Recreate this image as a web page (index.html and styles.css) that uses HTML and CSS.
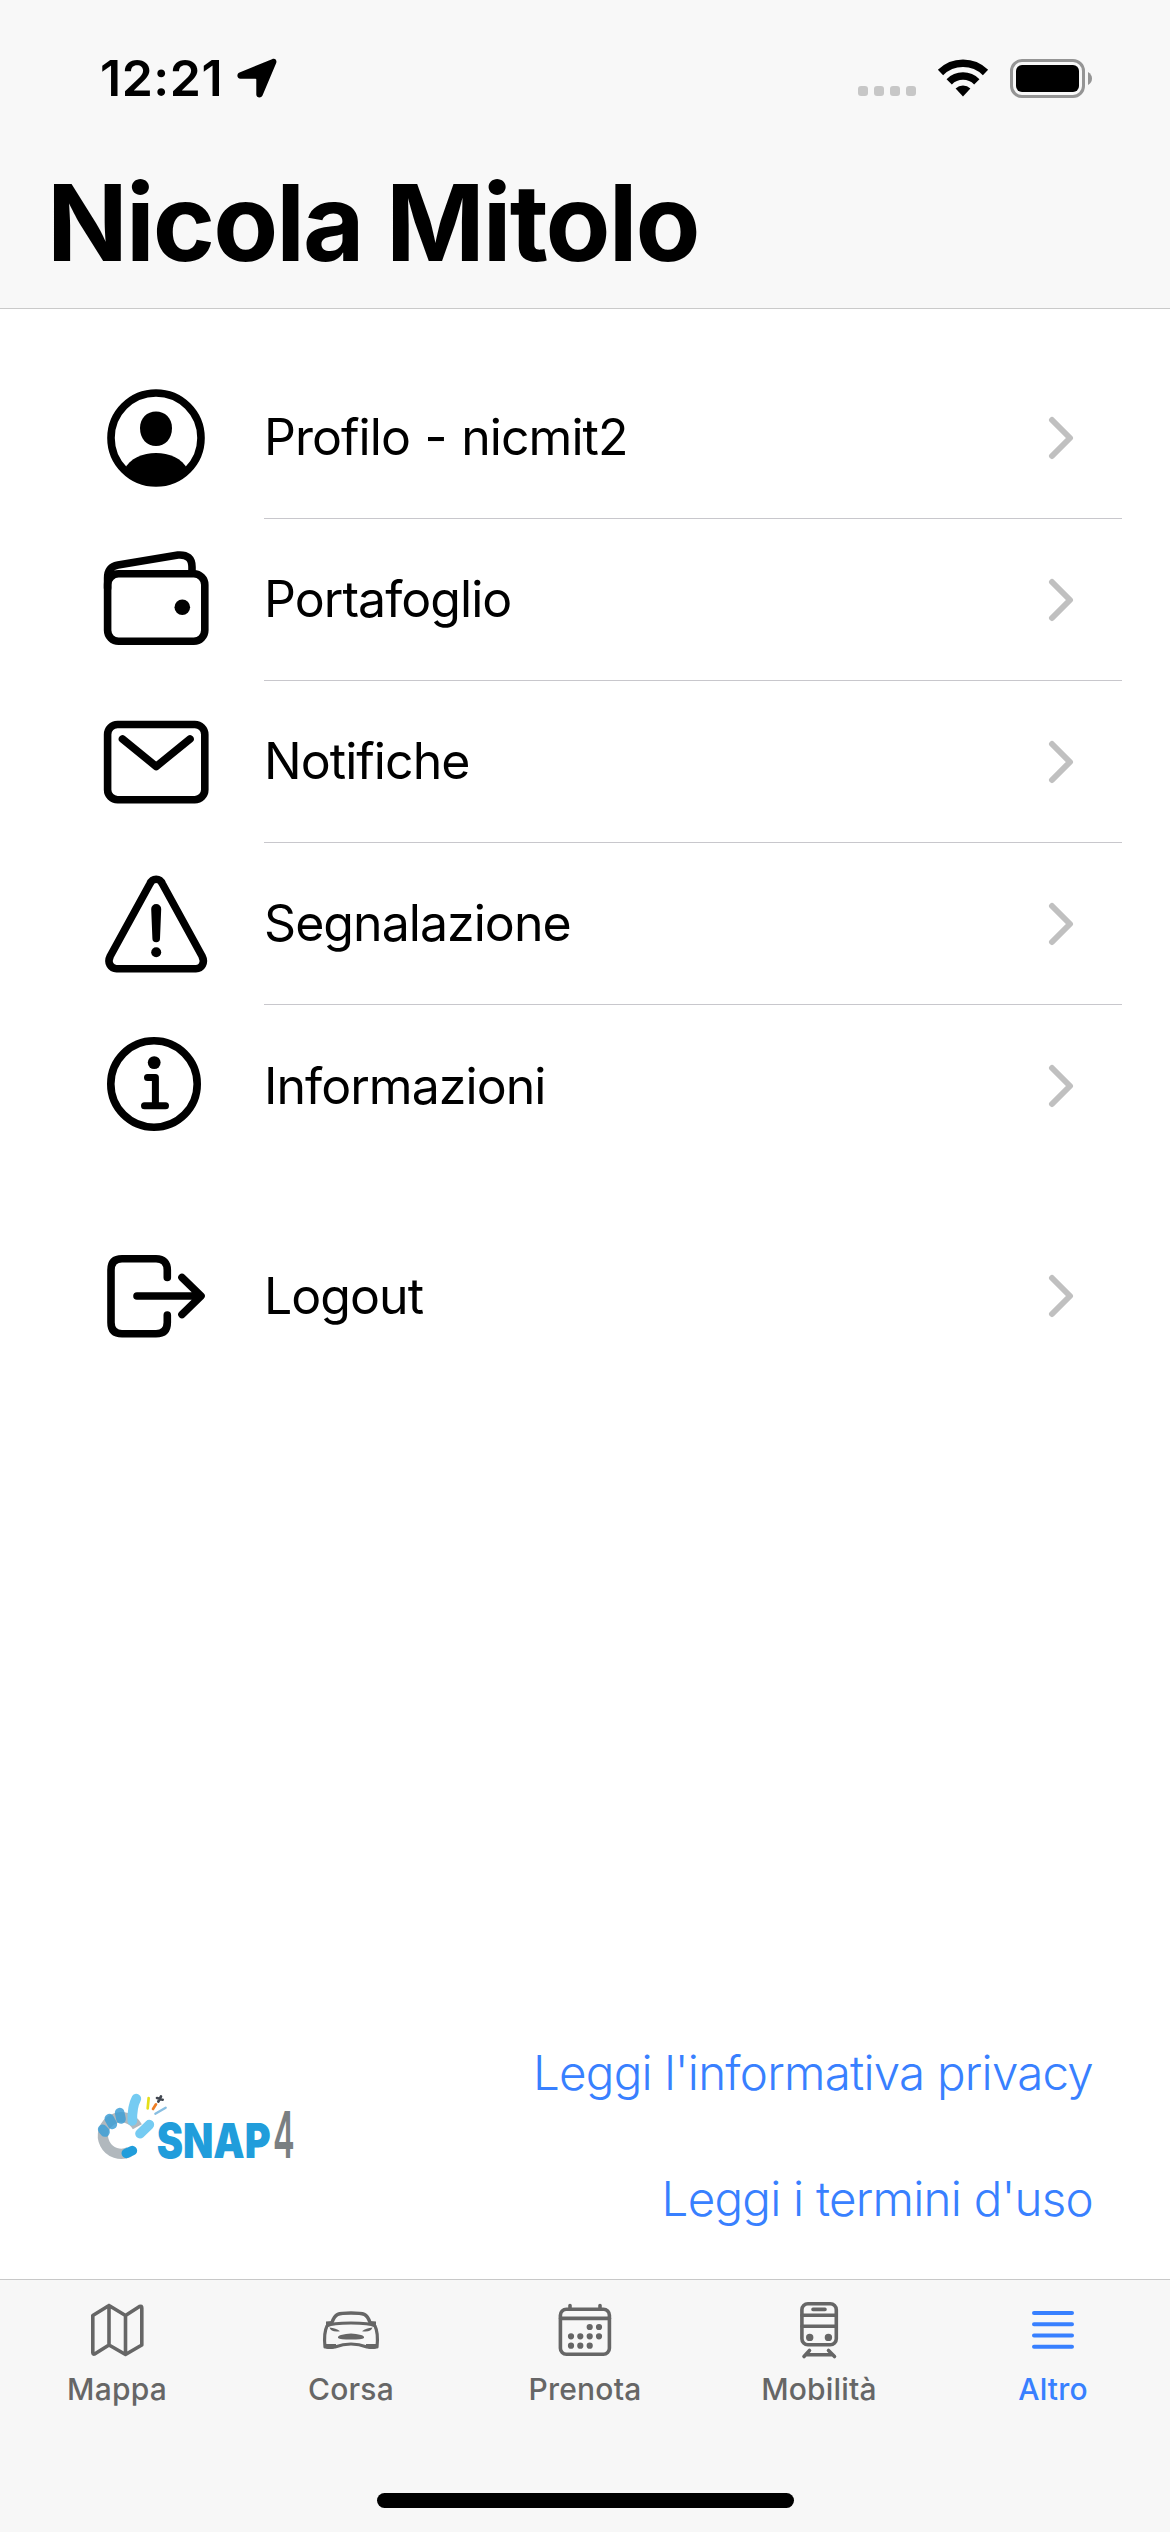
FILE: index.html
```html
<!DOCTYPE html>
<html lang="it">
<head>
  <meta charset="UTF-8">
  <meta name="viewport" content="width=device-width, initial-scale=1.0">
  <title>Altro</title>
  <link rel="stylesheet" href="styles.css">
</head>
<body>
  <div class="app">
    <header class="header">
      <div class="status-bar">
        <span class="time">12:21</span>
        <svg class="location" width="42" height="42" viewBox="0 0 42 42"><path d="M36 2.2C39 .8 41.2 3 40.2 6L26.5 38.5C25.2 41.5 20.3 41 20.3 37.5V22.5Q20.3 21.7 19.5 21.7H4.5C.8 21.7 .3 17 3.5 15.6Z"/></svg>
        <div class="signal"><i></i><i></i><i></i><i></i></div>
        <svg class="wifi" width="52" height="38" viewBox="0 0 52 38">
          <path d="M3.5 13.5A32 32 0 0 1 48.5 13.5" fill="none" stroke="#000" stroke-width="7.5"/>
          <path d="M12.2 22.8A19.5 19.5 0 0 1 39.8 22.8" fill="none" stroke="#000" stroke-width="7.5"/>
          <path d="M18.6 29.5A10.5 10.5 0 0 1 33.4 29.5L26 37.5Z"/>
        </svg>
        <div class="battery"><div class="level"></div></div>
        <svg class="nub" width="4" height="13" viewBox="0 0 4 13"><path d="M0 0Q4 2.5 4 6.5T0 13Z" fill="#959595"/></svg>
      </div>
      <h1 class="title">Nicola Mitolo</h1>
    </header>

    <main class="content">
      <div class="list">
        <div class="item">
          <svg class="icon" viewBox="0 0 112 112">
            <circle cx="56" cy="56" r="45"/>
            <path class="fill" d="M56 29.5C65 29.5 72 36 72 46C72 57 65 64 56 64S40 57 40 46C40 36 47 29.5 56 29.5Z"/>
            <path class="fill" d="M24 88C30 76 43 71 56 71S82 76 88 88A45 45 0 0 1 24 88Z"/>
          </svg>
          <div class="row"><span class="label">Profilo - nicmit2</span><svg class="chevron" viewBox="0 0 26 44"><path d="M4 4L22 22L4 40"/></svg></div>
        </div>
        <div class="item">
          <svg class="icon" viewBox="0 0 112 112">
            <rect x="7.6" y="29.8" width="97.2" height="67.5" rx="11"/>
            <path d="M7.6 44V34Q7.6 23 18 21L78 11Q92 10 92 23V29"/>
            <circle class="fill" cx="82.3" cy="63.3" r="7.8"/>
          </svg>
          <div class="row"><span class="label">Portafoglio</span><svg class="chevron" viewBox="0 0 26 44"><path d="M4 4L22 22L4 40"/></svg></div>
        </div>
        <div class="item">
          <svg class="icon" viewBox="0 0 112 112">
            <rect x="7.6" y="18.5" width="97.2" height="75.2" rx="10"/>
            <path d="M22.5 33L56.2 60.5L90 33"/>
          </svg>
          <div class="row"><span class="label">Notifiche</span><svg class="chevron" viewBox="0 0 26 44"><path d="M4 4L22 22L4 40"/></svg></div>
        </div>
        <div class="item">
          <svg class="icon" viewBox="0 0 112 112">
            <path d="M49.8 16C52.5 9.6 59.8 9.6 62.5 16L102 88C105.5 95 101.5 100.7 96 100.7H16.5C11 100.7 6.8 95 10.3 88Z"/>
            <path class="fill" d="M51.2 41A5 5 0 0 1 61.2 41L60 70.5A3.8 3.8 0 0 1 52.4 70.5Z"/>
            <circle class="fill" cx="56.2" cy="84.3" r="5"/>
          </svg>
          <div class="row"><span class="label">Segnalazione</span><svg class="chevron" viewBox="0 0 26 44"><path d="M4 4L22 22L4 40"/></svg></div>
        </div>
        <div class="item">
          <svg class="icon" viewBox="0 0 112 112">
            <circle cx="54" cy="54" r="43.2"/>
            <circle class="fill" cx="54.2" cy="32.6" r="6.4"/>
            <path d="M47.5 47.6H55.4V75.7M44.5 75.7H65.5" stroke-width="7"/>
          </svg>
          <div class="row last"><span class="label">Informazioni</span><svg class="chevron" viewBox="0 0 26 44"><path d="M4 4L22 22L4 40"/></svg></div>
        </div>
      </div>

      <div class="list logout">
        <div class="item">
          <svg class="icon" viewBox="0 0 112 112">
            <path d="M67.3 37.5V30Q67.3 18.8 56 18.8H22Q11 18.8 11 30V82.5Q11 93.7 22 93.7H56Q67.3 93.7 67.3 82.5V75"/>
            <path d="M37 56H100M82 37.5L101 56L82 74.5"/>
          </svg>
          <div class="row last"><span class="label">Logout</span><svg class="chevron" viewBox="0 0 26 44"><path d="M4 4L22 22L4 40"/></svg></div>
        </div>
      </div>

      <div class="bottom">
        <svg class="logo" width="240" height="110" viewBox="0 0 720 330">
          <path d="M148 246A55 55 0 1 1 172 170" fill="none" stroke="#b1b8bd" stroke-width="31"/>
          <g fill="none" stroke-linecap="round">
            <path d="M139 250L157 242" stroke="#219ddb" stroke-width="29"/>
            <path d="M68 178L75 186M88 146L97 163M119 128L123 147" stroke="#3f9fd6" stroke-opacity=".85" stroke-width="29"/>
            <path d="M169 86Q156 110 157 153M180 191L208 164" stroke="#75cbf2" stroke-width="29"/>
            <path d="M206 84L203 115" stroke="#e5df18" stroke-width="8"/>
            <path d="M228 103L219 117" stroke="#ee7d24" stroke-width="8"/>
            <path d="M257 113L226 131" stroke="#88bee1" stroke-width="7"/>
            <path d="M231 84L248 89M243 79L235 95" stroke="#414650" stroke-width="8"/>
          </g>
          <text class="snap" x="230" y="264" textLength="342" lengthAdjust="spacingAndGlyphs">SNAP</text>
          <text class="four" x="579" y="264" textLength="65" lengthAdjust="spacingAndGlyphs">4</text>
        </svg>
        <div class="links">
          <a class="privacy">Leggi l'informativa privacy</a>
          <a class="terms">Leggi i termini d'uso</a>
        </div>
      </div>
    </main>

    <footer class="footer">
      <nav class="tabs">
        <div class="tab">
          <svg viewBox="0 0 60 60"><path d="M5.8 15.5L22 5.5L38.5 15.5L52.5 6.5Q54.8 5.5 54.8 8V45L38.5 54.5L22 45L8 53.8Q5.8 54.8 5.8 52.5ZM22 5.5V45M38.5 15.5V54.5"/></svg>
          <span>Mappa</span>
        </div>
        <div class="tab">
          <svg viewBox="0 0 60 60">
            <path d="M11 22.5C14 13.5 17 13 30 13S46 13.5 49 22.5" stroke-width="3.4"/>
            <path d="M6 26Q11 23 30 23T54 26Q57.5 33 56 47H46Q30 41 14 47H4Q2.5 33 6 26Z" stroke-width="3.2"/>
            <path class="fill" d="M5 21.5L11 21L11 25H5ZM55 21.5L49 21L49 25H55ZM8.5 27.5Q15 28 19 31.2Q10 32.5 8.5 27.5ZM51.5 27.5Q45 28 41 31.2Q50 32.5 51.5 27.5ZM20 35Q30 32 40 35Q43.5 36 43 38Q41 39.5 30 39.5T17 38Q16.5 36 20 35ZM4 44H15V46Q14 49 11 49H7Q4 49 4 46ZM56 44H45V46Q46 49 49 49H53Q56 49 56 46Z"/>
          </svg>
          <span>Corsa</span>
        </div>
        <div class="tab">
          <svg viewBox="0 0 60 60">
            <path d="M15 5.5V9M45 5.5V9M5.5 18.4H54.5"/>
            <rect x="5.4" y="9.2" width="49" height="45" rx="6"/>
            <path class="dots" d="M34.7 27h.01M44 27h.01M16 36.3h.01M25.3 36.3h.01M34.7 36.3h.01M44 36.3h.01M16 45.7h.01M25.3 45.7h.01M34.7 45.7h.01"/>
          </svg>
          <span>Prenota</span>
        </div>
        <div class="tab">
          <svg viewBox="0 0 60 60">
            <rect x="12.9" y="3.8" width="34.4" height="41" rx="6"/>
            <path d="M24 9.4H36M13 15.2H47M13 26.3H47M20.5 50.5L15 56.5M39.5 50.5L45.5 56.5M17.5 54.7H43"/>
            <path class="dots big" d="M20.7 37.4h.01M39.4 37.4h.01"/>
          </svg>
          <span>Mobilità</span>
        </div>
        <div class="tab active">
          <svg viewBox="0 0 60 60"><path d="M11 13H49M11 24.3H49M11 35.5H49M11 46.8H49" stroke-width="4"/></svg>
          <span>Altro</span>
        </div>
      </nav>
      <div class="home-bar"></div>
    </footer>
  </div>
</body>
</html>
```
FILE: styles.css
```css
* { box-sizing: border-box; }
body { margin: 0; background: #fff; color: #000; font-family: Inter, Roboto, "Liberation Sans", sans-serif; }
svg { display: block; flex: none; }
.app { width: 1170px; height: 2532px; display: flex; flex-direction: column; overflow: hidden; }

/* header */
.header { height: 309px; background: #f8f8f8; border-bottom: 1px solid #cacaca; }
.status-bar { height: 156px; padding: 0 78px 0 100px; display: flex; align-items: center; }
.time { width: 124px; font-size: 50px; font-weight: 600; line-height: 60px; letter-spacing: 0.5px; white-space: nowrap; }
.location { margin-left: 12px; }
.signal { display: flex; gap: 6px; margin-left: auto; margin-top: 26px; }
.signal i { width: 10px; height: 10px; border-radius: 3px; background: #c7c7c7; }
.wifi { margin-left: 21px; }
.battery { width: 75px; height: 39px; margin-left: 21px; padding: 3px; border: 3px solid #959595; border-radius: 12px; }
.level { height: 27px; border-radius: 6px; background: #000; }
.nub { margin-left: 3px; }
.title { margin: 3px 0 0 47px; font-size: 106px; font-weight: 700; line-height: 128px; letter-spacing: -1.9px; white-space: nowrap; }

/* menu */
.content { flex: 1; display: flex; flex-direction: column; padding-top: 48px; }
.logout { margin-top: 48px; }
.item { display: flex; align-items: center; height: 162px; padding: 0 48px 0 100px; }
.icon { width: 112px; height: 112px; fill: none; stroke: #000; stroke-width: 7.6; stroke-linecap: round; stroke-linejoin: round; }
.icon .fill { fill: #000; stroke: none; }
.row { flex: 1; display: flex; align-items: center; justify-content: space-between; height: 162px; margin-left: 52px; padding-right: 48px; border-bottom: 1px solid #c8c7cc; }
.row.last { border-bottom: none; }
.label { padding-bottom: 1px; font-size: 50px; line-height: 60px; letter-spacing: -0.95px; word-spacing: 1.5px; white-space: nowrap; }
.chevron { width: 26px; height: 44px; fill: none; stroke: #c0c0c0; stroke-width: 6; stroke-linecap: round; stroke-linejoin: round; }

/* logo and links */
.bottom { display: flex; justify-content: space-between; align-items: flex-end; margin-top: auto; padding: 0 77px 50px 80px; }
.logo { margin-bottom: 49px; }
.snap { font-size: 146px; font-weight: 900; fill: #219ddb; }
.four { font-size: 195px; font-weight: 600; fill: #7a7f82; }
.links { display: flex; flex-direction: column; align-items: flex-end; gap: 66px; }
.links a { color: #3880ff; font-size: 47.5px; font-weight: 300; line-height: 60px; letter-spacing: -0.76px; white-space: nowrap; }

/* tab bar */
.footer { height: 253px; background: #f7f7f7; border-top: 1px solid #c8c8c8; }
.tabs { display: flex; height: 213px; padding-top: 20px; }
.tab { flex: 1; display: flex; flex-direction: column; align-items: center; color: #666; }
.tab svg { width: 60px; height: 60px; fill: none; stroke: currentColor; stroke-width: 3.6; stroke-linecap: round; stroke-linejoin: round; }
.tab .fill { fill: currentColor; stroke: none; }
.tab .dots { stroke-width: 6.2; }
.tab .big { stroke-width: 7.4; }
.tab span { margin-top: 11px; font-size: 30px; font-weight: 500; line-height: 36px; letter-spacing: 0.2px; }
.tab.active { color: #3880ff; }
.home-bar { width: 417px; height: 15px; margin: 0 auto; border-radius: 8px; background: #000; }
```
